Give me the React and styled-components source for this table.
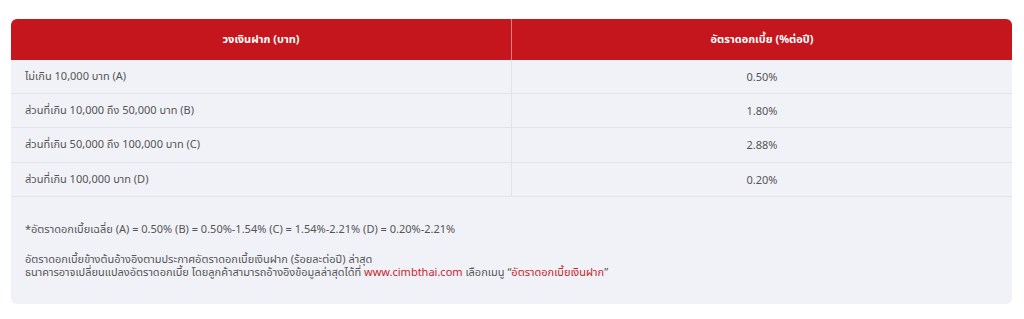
import React from "react";
import styled, { createGlobalStyle } from "styled-components";

const Global = createGlobalStyle`
  html, body { margin: 0; padding: 0; background: #ffffff; }
  body { font-family: "Noto Sans", "Noto Sans Thai", "DejaVu Sans", sans-serif; }
`;

const Card = styled.div`
  margin: 19px 12px 0 11px;
  width: 1001px;
  height: 285px;
  box-sizing: border-box;
  background: #f1f2f7;
  border-radius: 6px;
  overflow: hidden;
`;

const Table = styled.table`
  width: 100%;
  border-collapse: collapse;
  table-layout: fixed;
`;

const Th = styled.th`
  height: 40.5px;
  padding: 0 14px;
  background: #c4161c;
  color: #ffffff;
  font-size: 11px;
  font-weight: 700;
  text-align: center;
  border-left: ${(p) => (p.$divider ? "1px solid rgba(255,255,255,0.45)" : "none")};
`;

const Td = styled.td`
  height: 33.4px;
  padding: 0 14px;
  font-size: 11px;
  color: #555555;
  text-align: ${(p) => (p.$center ? "center" : "left")};
  border-bottom: 1px solid #e3e4e9;
  border-left: ${(p) => (p.$divider ? "1px solid #e3e4e9" : "none")};
  white-space: nowrap;
`;

const Notes = styled.div`
  padding: 25px 14px 0;
  font-size: 11px;
  color: #555555;
`;

const Note = styled.p`
  margin: 0 0 17px;
  line-height: 13px;
`;

const Link = styled.span`
  color: #c8232a;
`;

const rows = [
  ["ไม่เกิน 10,000 บาท (A)", "0.50%"],
  ["ส่วนที่เกิน 10,000 ถึง 50,000 บาท (B)", "1.80%"],
  ["ส่วนที่เกิน 50,000 ถึง 100,000 บาท (C)", "2.88%"],
  ["ส่วนที่เกิน 100,000 บาท (D)", "0.20%"],
];

export default function App() {
  return (
    <>
      <Global />
      <Card>
        <Table>
          <thead>
            <tr>
              <Th>วงเงินฝาก (บาท)</Th>
              <Th $divider>อัตราดอกเบี้ย (%ต่อปี)</Th>
            </tr>
          </thead>
          <tbody>
            {rows.map(([a, b]) => (
              <tr key={a}>
                <Td>{a}</Td>
                <Td $center $divider>{b}</Td>
              </tr>
            ))}
          </tbody>
        </Table>
        <Notes>
          <Note>*อัตราดอกเบี้ยเฉลี่ย (A) = 0.50% (B) = 0.50%-1.54% (C) = 1.54%-2.21% (D) = 0.20%-2.21%</Note>
          <Note>
            อัตราดอกเบี้ยข้างต้นอ้างอิงตามประกาศอัตราดอกเบี้ยเงินฝาก (ร้อยละต่อปี) ล่าสุด
            <br />
            ธนาคารอาจเปลี่ยนแปลงอัตราดอกเบี้ย โดยลูกค้าสามารถอ้างอิงข้อมูลล่าสุดได้ที่ <Link>www.cimbthai.com</Link> เลือกเมนู “<Link>อัตราดอกเบี้ยเงินฝาก</Link>”
          </Note>
        </Notes>
      </Card>
    </>
  );
}
